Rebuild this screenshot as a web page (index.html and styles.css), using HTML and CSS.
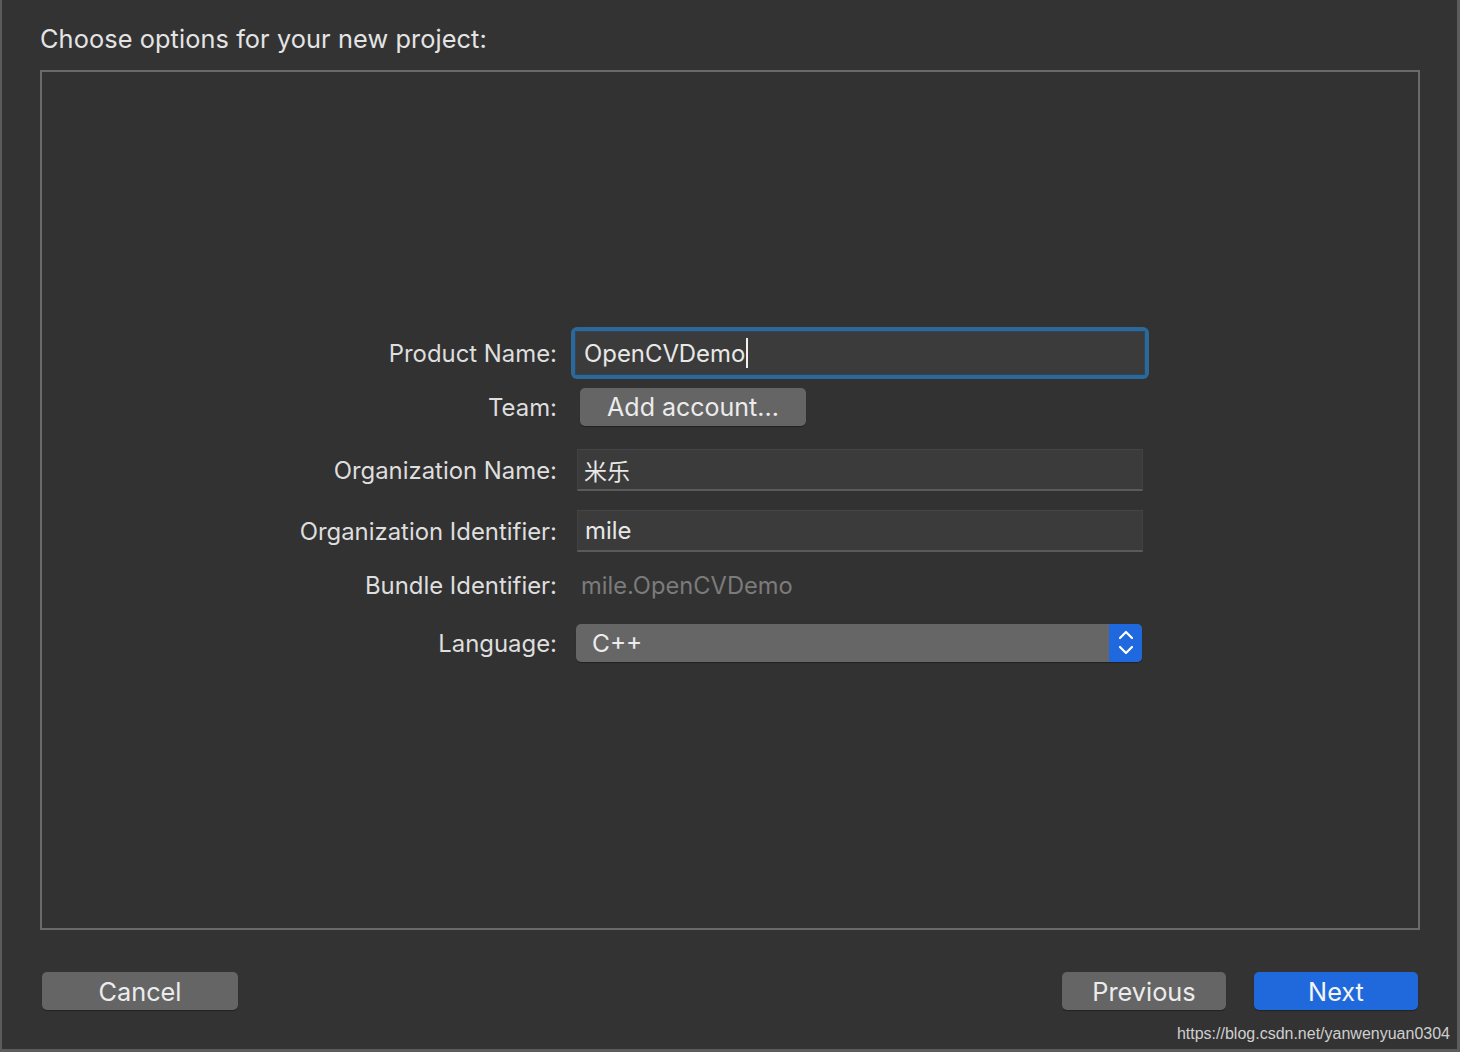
FILE: index.html
```html
<!DOCTYPE html>
<html>
<head>
<meta charset="utf-8">
<link rel="stylesheet" href="styles.css">
</head>
<body>
<div class="window">
  <h1 class="title">Choose options for your new project:</h1>
  <div class="panel">
    <div class="form">
      <div class="label">Product Name:</div>
      <div class="cell">
        <div class="focus-ring"><div class="input focused"><span>OpenCVDemo</span><span class="caret"></span></div></div>
      </div>

      <div class="label">Team:</div>
      <div class="cell"><div class="btn small">Add account...</div></div>

      <div class="label">Organization Name:</div>
      <div class="cell"><div class="input plain cjk">米乐</div></div>

      <div class="label">Organization Identifier:</div>
      <div class="cell"><div class="input plain">mile</div></div>

      <div class="label">Bundle Identifier:</div>
      <div class="cell"><div class="static">mile.OpenCVDemo</div></div>

      <div class="label">Language:</div>
      <div class="cell">
        <div class="popup">
          <span class="popup-text">C++</span>
          <span class="popup-arrows">
            <svg width="20" height="30" viewBox="0 0 20 30"><path d="M4 10 L10 4 L16 10" fill="none" stroke="#fff" stroke-width="2.2" stroke-linecap="round" stroke-linejoin="round"/><path d="M4 19 L10 25 L16 19" fill="none" stroke="#fff" stroke-width="2.2" stroke-linecap="round" stroke-linejoin="round"/></svg>
          </span>
        </div>
      </div>
    </div>
  </div>
  <div class="footer">
    <div class="btn big cancel">Cancel</div>
    <div class="right-btns">
      <div class="btn big">Previous</div>
      <div class="btn big primary">Next</div>
    </div>
  </div>
  <div class="watermark">https://blog.csdn.net/yanwenyuan0304</div>
</div>
</body>
</html>
```
FILE: styles.css
```css
* { box-sizing: border-box; }
html, body { margin: 0; padding: 0; background: #333333; }
body { font-family: Inter, "Noto Sans", "Noto Sans CJK SC", sans-serif; color: #e2e2e2; }

.window {
  width: 1460px;
  height: 1052px;
  border-left: 2px solid #5c5c5c;
  border-right: 3px solid #5c5c5c;
  border-bottom: 3px solid #5c5c5c;
  background: #333333;
  padding-left: 38px;
  overflow: hidden;
}

.title {
  margin: 0;
  padding-top: 24px;
  height: 70px;
  font-size: 25.3px;
  line-height: 30px;
  font-weight: 400;
  color: #e4e4e4;
  letter-spacing: 0.1px;
}

.panel {
  width: 1380px;
  height: 860px;
  border: 2px solid #6a6a6a;
  background: #323232;
  padding-top: 254px;
}

.form {
  display: grid;
  grid-template-columns: 515px 578px;
  grid-template-rows: 54px 54px 72px 50px 58px 58px;
  column-gap: 14px;
  align-items: center;
}

.label {
  text-align: right;
  font-size: 23.9px;
  color: #dedede;
  line-height: 28px;
  padding-top: 2px;
}

.cell { display: flex; align-items: center; }

.focus-ring {
  width: 578px;
  height: 52px;
  border-radius: 6px;
  background: #2d6896;
  padding: 4px;
}
.input {
  height: 42px;
  background: #3b3b3b;
  display: flex;
  align-items: center;
  font-size: 23.9px;
  color: #e8e8e8;
  padding-left: 7px;
}
.input.focused {
  height: 44px;
  padding-left: 8px;
  border: 1px solid #25486a;
}
.caret {
  display: inline-block;
  width: 2px;
  height: 30px;
  background: #f0f0f0;
  margin-left: 1px;
}
.input.plain {
  width: 566px;
  margin-left: 6px;
  border-top: 1px solid #454545;
  border-left: 1px solid #424242;
  border-right: 1px solid #424242;
  border-bottom: 2px solid #5a5a5a;
}
.input.cjk { font-family: "Noto Sans CJK SC", sans-serif; font-size: 23px; padding-left: 6px; }

.btn {
  display: flex;
  align-items: center;
  justify-content: center;
  background: #656565;
  border-radius: 5px;
  color: #ececec;
  box-shadow: 0 1px 1px rgba(0,0,0,0.35);
}
.btn.small {
  width: 226px;
  height: 38px;
  margin-left: 9px;
  font-size: 25px;
}

.static {
  margin-left: 10px;
  font-size: 23.7px;
  color: #7b7b7b;
}

.popup {
  width: 566px;
  height: 38px;
  margin-left: 5px;
  background: #666666;
  border-radius: 5px;
  display: flex;
  align-items: center;
  justify-content: space-between;
  box-shadow: 0 1px 1px rgba(0,0,0,0.35);
  overflow: hidden;
}
.popup-text {
  padding-left: 16px;
  font-size: 24.5px;
  color: #ececec;
}
.popup-arrows {
  width: 33px;
  height: 38px;
  background: #1f68dd;
  display: flex;
  align-items: center;
  justify-content: center;
}

.footer {
  display: flex;
  justify-content: space-between;
  padding-top: 42px;
  padding-left: 2px;
  width: 1380px;
}
.btn.big {
  height: 38px;
  font-size: 25.3px;
}
.btn.cancel { width: 196px; }
.right-btns { display: flex; gap: 28px; margin-right: 2px; }
.right-btns .btn { width: 164px; }
.btn.primary { background: #1f69dd; color: #f4f4f4; }

.watermark {
  text-align: right;
  margin-right: 7px;
  margin-top: 14px;
  font-family: "Liberation Sans", Arial, sans-serif;
  font-size: 16px;
  color: #cfcfcf;
  line-height: 20px;
}
```
